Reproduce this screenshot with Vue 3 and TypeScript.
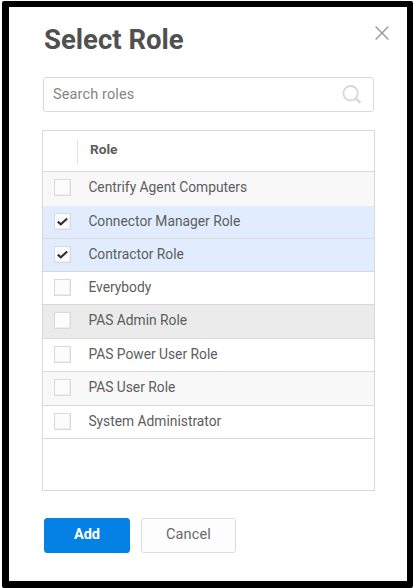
<script setup lang="ts">
import { ref } from 'vue'

interface Role {
  name: string
  checked: boolean
  tone: string
}

const query = ref('')
const roles = ref<Role[]>([
  { name: 'Centrify Agent Computers', checked: false, tone: 'alt tall' },
  { name: 'Connector Manager Role', checked: true, tone: 'selected' },
  { name: 'Contractor Role', checked: true, tone: 'selected' },
  { name: 'Everybody', checked: false, tone: '' },
  { name: 'PAS Admin Role', checked: false, tone: 'hover tall' },
  { name: 'PAS Power User Role', checked: false, tone: '' },
  { name: 'PAS User Role', checked: false, tone: 'alt tall' },
  { name: 'System Administrator', checked: false, tone: '' },
])
</script>

<template>
  <main class="dialog">
    <header class="head">
      <h1>Select Role</h1>
      <button class="close" aria-label="Close">
        <svg width="14" height="14" viewBox="0 0 14 14"><path d="M.6.6 13.4 13.4M13.4.6.6 13.4" /></svg>
      </button>
    </header>
    <label class="search">
      <input v-model="query" placeholder="Search roles" />
      <svg width="20" height="20" viewBox="0 0 20 20">
        <circle cx="8.6" cy="8.2" r="7.2" />
        <path d="m13.6 13.3 4.8 4.5" class="handle" />
      </svg>
    </label>
    <section class="table">
      <div class="thead"><i class="divider"></i><span>Role</span></div>
      <div v-for="role in roles" :key="role.name" class="row" :class="role.tone" @click="role.checked = !role.checked">
        <span class="box">
          <svg v-if="role.checked" width="11" height="9" viewBox="0 0 11 9"><path d="m.8 4.6 3 2.7L10.2 1.4" /></svg>
        </span>
        <span class="name">{{ role.name }}</span>
      </div>
    </section>
    <footer class="actions">
      <button class="btn add">Add</button>
      <button class="btn cancel">Cancel</button>
    </footer>
  </main>
</template>

<style>
body {
  background: #fff;
}
</style>

<style scoped>
* {
  box-sizing: border-box;
}
.dialog {
  width: 411px;
  height: 587px;
  margin: 1px 0 0 2px;
  border: solid #000;
  border-width: 6px 6px 7px 7px;
  border-radius: 2px;
  padding: 0 32px 0 33px;
  background: #fff;
  font-family: Roboto, sans-serif;
  color: #5c5d60;
  overflow: hidden;
}
.dialog button {
  font-family: inherit;
  padding: 0;
  cursor: pointer;
}
.head {
  display: flex;
  justify-content: space-between;
  height: 70px;
  margin-right: -14px;
}
h1 {
  margin: 16px 0 0 2px;
  font-size: 27.5px;
  line-height: 34px;
  font-weight: 700;
  color: #505050;
  white-space: nowrap;
}
.close {
  width: 14px;
  height: 14px;
  margin-top: 19px;
  border: 0;
  background: none;
}
.close svg {
  display: block;
  fill: none;
  stroke: #9a9a9a;
  stroke-width: 1.4;
}
.search {
  display: flex;
  align-items: center;
  justify-content: space-between;
  height: 35px;
  margin: 0 1px;
  padding: 0 11px 0 9px;
  border: 1px solid #d9d9d9;
  border-radius: 3px;
}
.search input {
  width: 200px;
  padding: 0;
  border: 0;
  outline: 0;
  background: none;
  font: 14.5px/20px Roboto, sans-serif;
  letter-spacing: 0.13px;
  color: #666;
}
.search input::placeholder {
  color: #858585;
  opacity: 1;
}
.search svg {
  fill: none;
  stroke: #d6d6d6;
  stroke-width: 1.8;
}
.search .handle {
  stroke-width: 2.3;
}
.table {
  height: 361px;
  margin-top: 18px;
  border: 1px solid #d9d9d9;
}
.thead {
  display: flex;
  height: 41px;
  border-bottom: 1px solid #d9d9d9;
  font-size: 13.7px;
  line-height: 37px;
  font-weight: 700;
}
.divider {
  width: 1px;
  height: 26px;
  margin: 8px 12px 0 34px;
  background: #e4e4e4;
}
.row {
  display: flex;
  height: 33px;
  padding-left: 11px;
  border-bottom: 1px solid #d9d9d9;
}
.row.tall {
  height: 34px;
}
.row.alt {
  background: #f8f8f8;
}
.row.alt:nth-child(2) {
  border-bottom-color: #f8f8f8;
}
.row.selected {
  background: #e1edfe;
}
.row.hover {
  background: #ebebeb;
}
.box {
  display: flex;
  align-items: center;
  justify-content: center;
  width: 17px;
  height: 17px;
  margin-top: 7px;
  border: 1px solid #dadada;
  box-shadow: inset -1px -1px #eee;
  background: #fcfcfc;
}
.box svg {
  fill: none;
  stroke: #2b2e38;
  stroke-width: 2.1;
}
.name {
  margin-left: 17.4px;
  font-size: 13.8px;
  line-height: 31px;
  white-space: nowrap;
}
.actions {
  display: flex;
  gap: 11px;
  margin: 27px 0 0 2px;
}
.btn {
  height: 35px;
  padding-bottom: 2px !important;
  border-radius: 3px;
  font-size: 14.5px;
  line-height: 30px;
}
.add {
  width: 86px;
  border: 1px solid #0580e5;
  background: #0580e5;
  color: #fff;
  font-weight: 700;
}
.cancel {
  width: 95px;
  border: 1px solid #dcdcdc;
  background: #fdfdfd;
  color: #68696b;
  letter-spacing: 0.15px;
}
</style>
